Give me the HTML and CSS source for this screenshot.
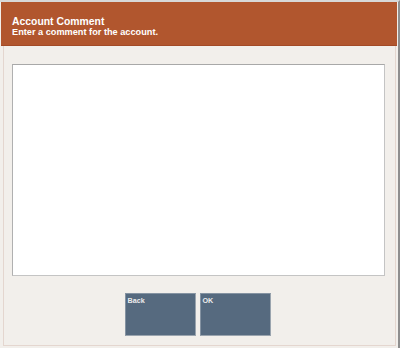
FILE: index.html
```html
<!DOCTYPE html>
<html>
<head>
<meta charset="utf-8">
<link rel="stylesheet" href="styles.css">
</head>
<body>
<div class="screen">
  <div class="header">
    <div class="title">Account Comment</div>
    <div class="subtitle">Enter a comment for the account.</div>
  </div>
  <div class="panel">
    <textarea class="comment"></textarea>
    <div class="actions">
      <button class="btn">Back</button>
      <button class="btn">OK</button>
    </div>
  </div>
</div>
</body>
</html>
```
FILE: styles.css
```css
html, body {
  margin: 0;
  padding: 0;
  background: #f2efeb;
}
.screen {
  width: 400px;
  height: 348px;
  box-sizing: border-box;
  border-top: 2px solid #d8d8d8;
  border-right: 2px solid #8e8e8e;
  padding-left: 1px;
  background: #f2efeb;
  display: flex;
  flex-direction: column;
  font-family: "Liberation Sans", Arial, sans-serif;
}
.header {
  height: 44px;
  margin-right: 1px;
  background: #b1562e;
  border-bottom: 1px solid #a34a26;
  box-sizing: border-box;
  padding: 14px 0 0 11px;
  color: #ffffff;
  font-weight: bold;
}
.title {
  font-size: 10.4px;
  line-height: 11px;
}
.subtitle {
  font-size: 9.2px;
  line-height: 10px;
}
.panel {
  flex: 1;
  margin: 0 2px 2px 2px;
  border: 1px solid #e4d6cf;
  border-top: none;
  box-sizing: border-box;
  padding: 18px 10px 0 8px;
  display: flex;
  flex-direction: column;
}
.comment {
  display: block;
  height: 212px;
  width: 100%;
  box-sizing: border-box;
  margin: 0;
  border: 1px solid #c4c4c4;
  border-top-color: #a8a8a8;
  border-left-color: #b0b0b0;
  background: #ffffff;
  resize: none;
  outline: none;
}
.actions {
  display: flex;
  justify-content: center;
  gap: 4px;
  margin-top: 17px;
  padding-right: 2px;
}
.btn {
  width: 71px;
  height: 43px;
  margin: 0;
  padding: 3px 2px;
  box-sizing: border-box;
  background: #566a7f;
  border: 1px solid #8593a2;
  border-right-color: #9aa4ae;
  border-bottom-color: #9aa4ae;
  color: #ececec;
  font-family: "Liberation Sans", Arial, sans-serif;
  font-weight: bold;
  font-size: 7.2px;
  line-height: 8px;
  text-align: left;
  display: flex;
  align-items: flex-start;
}
```
